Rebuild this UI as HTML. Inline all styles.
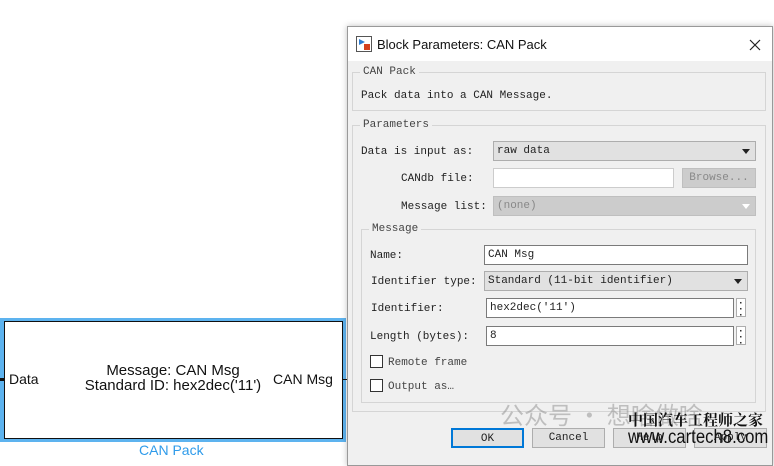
<!DOCTYPE html>
<html><head><meta charset="utf-8"><style>
*{margin:0;padding:0;box-sizing:border-box}
body{width:774px;height:457px;overflow:hidden;background:#fff;position:relative;font-family:"Liberation Mono","Noto Sans CJK SC",monospace;font-size:11px;color:#222}
.a{position:absolute;white-space:nowrap}
.sans{font-family:"Liberation Sans",sans-serif}
.grp{position:absolute;border:1px solid #d5d5d5}
.gl{position:absolute;background:#f0f0f0;padding:0 3px;color:#444;font-size:11px;line-height:12px}
.inp{position:absolute;background:#fff;border:1px solid #7a7a7a;padding-left:3px;line-height:19px}
.sel{position:absolute;background:#e1e1e1;border:1px solid #adadad;padding-left:3px;line-height:19px}
.btn{position:absolute;background:#e1e1e1;border:1px solid #adadad;text-align:center;line-height:18px}
.arr{position:absolute;right:5px;top:7px;width:0;height:0;border-left:4px solid transparent;border-right:4px solid transparent;border-top:5px solid #222}
.dots{position:absolute;background:#fff;border:1px solid #adadad;width:10px;height:19px;text-align:center;font-size:10px;line-height:6px;padding-top:2px;font-family:"Liberation Sans",sans-serif;font-weight:bold}
.cb{position:absolute;width:13px;height:13px;border:1px solid #333;background:#fff}
</style></head><body>
<!-- block -->
<div class="a" style="left:0;top:318px;width:346px;height:124px;background:#5db3ef"></div>
<div class="a" style="left:4px;top:321px;width:339px;height:118px;background:#fff;border:1px solid #111"></div>
<div class="a" style="left:0;top:378px;width:4px;height:3px;background:#111"></div>
<div class="a" style="left:342px;top:379px;width:6px;height:1px;background:#111"></div>
<div class="a sans" style="left:9px;top:371px;font-size:14px;color:#111">Data</div>
<div class="a sans" style="left:68px;top:363px;width:210px;text-align:center;font-size:15px;line-height:15px;color:#111">Message: CAN Msg<br>Standard ID: hex2dec('11')</div>
<div class="a sans" style="left:273px;top:371px;font-size:14px;color:#111">CAN Msg</div>
<div class="a sans" style="left:139px;top:442px;font-size:14px;color:#2f9bea">CAN Pack</div>
<!-- dialog -->
<div class="a" style="left:347px;top:26px;width:426px;height:440px;background:#f0f0f0;border:1px solid #999;box-shadow:0 0 6px rgba(0,0,0,.25)"></div>
<div class="a" style="left:348px;top:27px;width:424px;height:34px;background:#fff"></div>
<svg class="a" style="left:356px;top:36px" width="16" height="16"><rect x="0.5" y="0.5" width="15" height="15" fill="#fff" stroke="#555"/><path d="M3 3 L9 6 L3 9Z" fill="#2b7bd0"/><rect x="8" y="8" width="6" height="6" fill="#d4401c"/></svg>
<div class="a sans" style="left:377px;top:37px;font-size:13px;color:#111">Block Parameters: CAN Pack</div>
<svg class="a" style="left:749px;top:39px" width="12" height="12"><path d="M1 1L11 11M11 1L1 11" stroke="#222" stroke-width="1.2"/></svg>

<div class="grp" style="left:352px;top:72px;width:414px;height:39px"></div>
<div class="gl" style="left:360px;top:66px">CAN Pack</div>
<div class="a" style="left:361px;top:90px">Pack data into a CAN Message.</div>

<div class="grp" style="left:352px;top:125px;width:414px;height:287px"></div>
<div class="gl" style="left:360px;top:119px">Parameters</div>
<div class="a" style="left:361px;top:146px">Data is input as:</div>
<div class="sel" style="left:493px;top:141px;width:263px;height:20px">raw data<div class="arr"></div></div>
<div class="a" style="left:401px;top:173px">CANdb file:</div>
<div class="inp" style="left:493px;top:168px;width:181px;height:20px;border-color:#ccc"></div>
<div class="btn" style="left:682px;top:168px;width:74px;height:20px;background:#ccc;border-color:#bfbfbf;color:#888">Browse...</div>
<div class="a" style="left:401px;top:201px">Message list:</div>
<div class="sel" style="left:493px;top:196px;width:263px;height:20px;background:#ccc;border-color:#bfbfbf;color:#888">(none)<div class="arr" style="border-top-color:#fff"></div></div>

<div class="grp" style="left:361px;top:229px;width:395px;height:174px"></div>
<div class="gl" style="left:369px;top:223px">Message</div>
<div class="a" style="left:370px;top:250px">Name:</div>
<div class="inp" style="left:484px;top:245px;width:264px;height:20px">CAN Msg</div>
<div class="a" style="left:371px;top:276px">Identifier type:</div>
<div class="sel" style="left:484px;top:271px;width:264px;height:20px">Standard (11-bit identifier)<div class="arr"></div></div>
<div class="a" style="left:371px;top:303px">Identifier:</div>
<div class="inp" style="left:486px;top:298px;width:248px;height:20px">hex2dec('11')</div>
<div class="dots" style="left:736px;top:298px">·<br>·<br>·</div>
<div class="a" style="left:370px;top:331px">Length (bytes):</div>
<div class="inp" style="left:486px;top:326px;width:248px;height:20px">8</div>
<div class="dots" style="left:736px;top:326px">·<br>·<br>·</div>
<div class="cb" style="left:370px;top:355px"></div>
<div class="a" style="left:388px;top:357px;color:#444">Remote frame</div>
<div class="cb" style="left:370px;top:379px"></div>
<div class="a" style="left:388px;top:381px;color:#444">Output as…</div>

<div class="btn" style="left:451px;top:428px;width:73px;height:20px;border:2px solid #0078d7">OK</div>
<div class="btn" style="left:532px;top:428px;width:73px;height:20px">Cancel</div>
<div class="btn" style="left:613px;top:428px;width:73px;height:20px">Help</div>
<div class="btn" style="left:694px;top:428px;width:73px;height:20px">Apply</div>
<!-- watermark -->
<div class="a" style="left:500px;top:396px;font-family:'Noto Sans CJK SC',sans-serif;font-size:24px;color:rgba(150,150,150,.55)">公众号 · 想啥做啥</div>
<div class="a" style="left:628px;top:409px;font-family:'Noto Serif CJK SC',serif;font-size:15px;font-weight:bold;color:#111">中国汽车工程师之家</div>
<div class="a sans" style="left:628px;top:427px;font-size:19px;color:#111;transform:scaleX(.88);transform-origin:0 0">www.cartech8.com</div>
</body></html>
